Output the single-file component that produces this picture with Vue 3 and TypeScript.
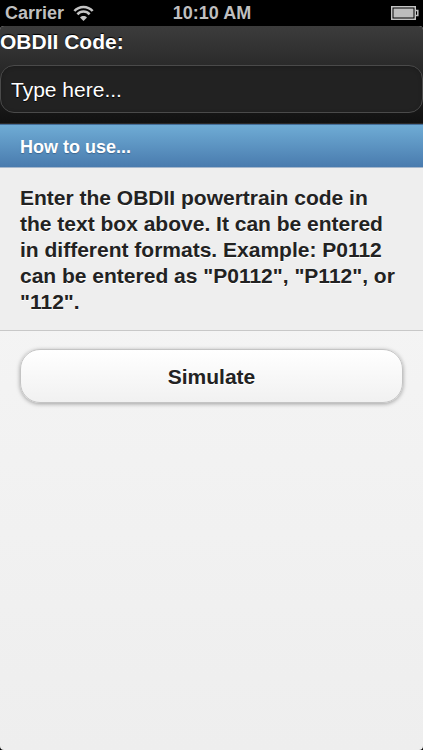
<script setup lang="ts">
import { ref } from 'vue'

const code = ref('')
const carrier = 'Carrier'
const time = '10:10 AM'
</script>

<template>
  <div class="device">
    <div class="status-bar">
      <div class="carrier">
        <span>{{ carrier }}</span>
        <svg class="wifi" viewBox="0 0 20 16" aria-hidden="true">
          <path d="M1.3 5.6 C6 0.4 14 0.4 18.7 5.6" />
          <path d="M4.2 8.9 C7.4 5.3 12.6 5.3 15.8 8.9" />
          <path class="dot" d="M6.7 11.7 C8.6 9.8 11.4 9.8 13.3 11.7 L10 15.2 Z" />
        </svg>
      </div>
      <span class="time">{{ time }}</span>
      <svg class="battery" viewBox="0 0 28 14" aria-hidden="true">
        <rect class="shell" x="0.75" y="0.75" width="23.5" height="12.5" />
        <rect class="charge" x="2.5" y="2.5" width="20" height="9" />
        <path class="shell" d="M24.5 4.5 H26.8 V9.5 H24.5" />
      </svg>
    </div>

    <div class="page">
      <header class="header">
        <label for="code">OBDII Code:</label>
        <input id="code" v-model="code" type="text" placeholder="Type here..." />
      </header>

      <main>
        <section>
          <h2>How to use...</h2>
          <p>
            Enter the OBDII powertrain code in the text box above. It can be
            entered in different formats. Example: P0112 can be entered as
            "P0112", "P112", or "112".
          </p>
        </section>
        <div class="actions">
          <button type="button">Simulate</button>
        </div>
      </main>
    </div>
  </div>
</template>

<style>
body {
  background: #000;
}
</style>

<style scoped>
.device {
  display: flex;
  flex-direction: column;
  min-height: 100vh;
  background: #000;
  font-family: "Liberation Sans", Arial, sans-serif;
}

.device * {
  box-sizing: border-box;
}

.status-bar {
  display: grid;
  grid-template-columns: 1fr auto 1fr;
  align-items: center;
  height: 26px;
  padding: 0 4px 0 5px;
  color: #bfbfbf;
  font-size: 18px;
  font-weight: bold;
  line-height: 26px;
}

.carrier {
  display: flex;
  align-items: center;
  gap: 9px;
}

.wifi {
  width: 21px;
  height: 17px;
  fill: none;
  stroke: #c4c4c4;
  stroke-width: 2.4;
}

.wifi .dot {
  fill: #c4c4c4;
  stroke: none;
}

.battery {
  justify-self: end;
  width: 28px;
  height: 14px;
}

.shell {
  fill: none;
  stroke: #c4c4c4;
  stroke-width: 1.5;
}

.charge {
  fill: #bdbdbd;
}

.page {
  flex: 1;
  overflow: hidden;
  border-radius: 4px;
  background: linear-gradient(#f4f4f4 40%, #eee);
}

.header {
  display: flex;
  flex-direction: column;
  gap: 10px;
  padding-bottom: 10px;
  border-bottom: 1px solid #2a2a2a;
  background: linear-gradient(#3c3c3c, #111);
}

label {
  padding-top: 3px;
  color: #fff;
  font-size: 21px;
  font-weight: bold;
  line-height: 26px;
  text-shadow: 0 -1px 1px #000;
}

input {
  width: 100%;
  height: 48px;
  padding: 2px 10px 0;
  border: 1px solid #4a4a4a;
  border-radius: 14px;
  outline: none;
  background: #222;
  box-shadow: inset 0 1px 4px rgba(0, 0, 0, 0.2);
  color: #fff;
  font: 21px "Liberation Sans", Arial, sans-serif;
  text-shadow: 0 1px 1px #000;
}

input::placeholder {
  color: #fff;
  opacity: 1;
}

h2 {
  margin: 0;
  padding: 2px 20px 0;
  border-top: 1px solid #456f9a;
  border-bottom: 1px solid #a5b7cc;
  background: linear-gradient(#6facd5, #497bae);
  color: #fff;
  font-size: 18px;
  font-weight: bold;
  line-height: 40px;
  text-shadow: 0 1px 1px #3e6790;
}

p {
  margin: 0;
  padding: 17px 20px 15px;
  border-bottom: 1px solid #c8c8c8;
  background: #eee;
  color: #222;
  font-size: 21px;
  font-weight: bold;
  line-height: 26px;
  text-shadow: 0 1px 0 #fff;
}

.actions {
  padding: 18px 20px;
}

button {
  display: block;
  width: 100%;
  height: 54px;
  padding: 2px 20px 0;
  border: 1px solid #c4c4c4;
  border-radius: 20px;
  background: linear-gradient(#fff, #f1f1f1);
  box-shadow: 0 1px 4px rgba(0, 0, 0, 0.35);
  color: #222;
  font: bold 21px "Liberation Sans", Arial, sans-serif;
  text-shadow: 0 1px 0 #fff;
}
</style>
